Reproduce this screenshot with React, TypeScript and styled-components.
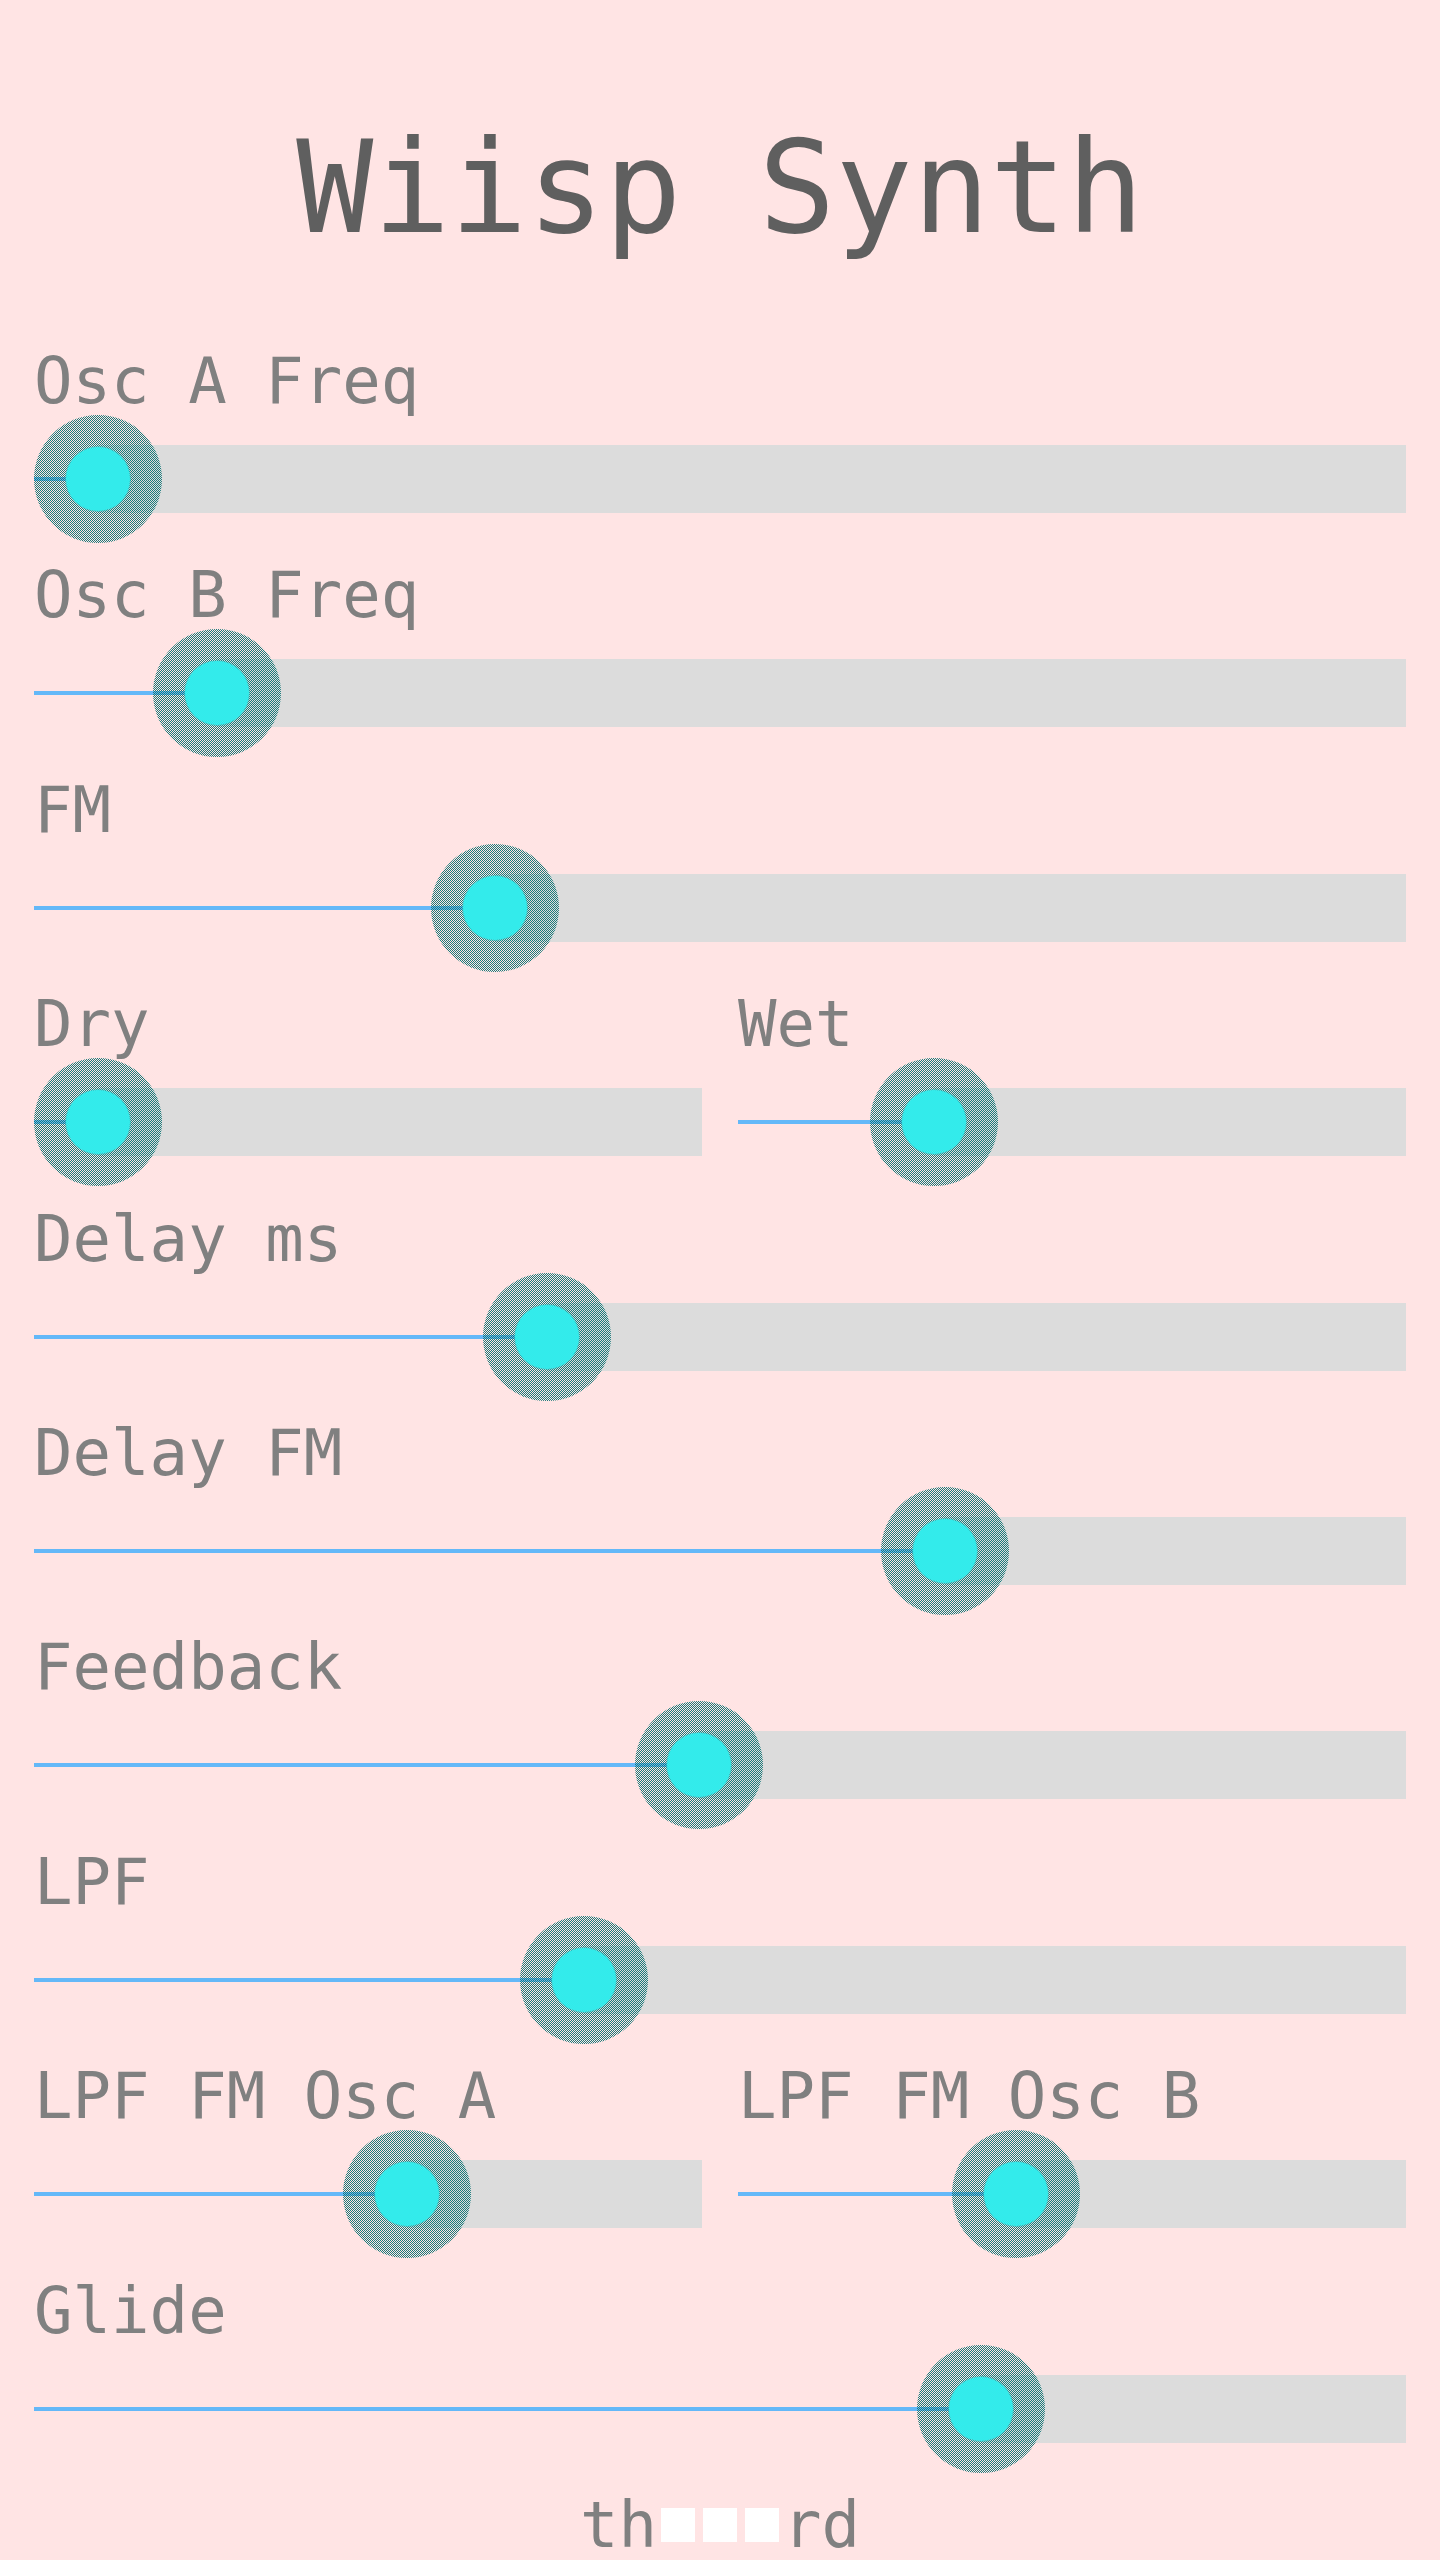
import React from "react";
import styled, { createGlobalStyle } from "styled-components";

const Global = createGlobalStyle`
  html, body {
    margin: 0;
    padding: 0;
    background: #ffe4e4;
  }
  body {
    font-family: "DejaVu Sans Mono", "Liberation Mono", monospace;
  }
`;

const Page = styled.main`
  box-sizing: border-box;
  width: 1440px;
  min-height: 2560px;
  padding: 124px 34px 0;
  display: flex;
  flex-direction: column;
`;

const Title = styled.h1`
  margin: 0 0 97px;
  font-family: "DejaVu Sans Mono", monospace;
  font-weight: normal;
  font-size: 128px;
  line-height: 128px;
  color: #5f5f5f;
  text-align: center;
`;

const Rows = styled.div`
  display: flex;
  flex-direction: column;
  gap: 20.4px;
`;

const Pair = styled.div`
  display: grid;
  grid-template-columns: 1fr 1fr;
  column-gap: 36px;
`;

const Field = styled.div`
  display: flex;
  flex-direction: column;
  gap: 2px;
  min-width: 0;
`;

const Label = styled.label`
  font-family: "DejaVu Sans Mono", monospace;
  font-size: 64px;
  line-height: 64px;
  height: 64px;
  color: #808080;
  white-space: nowrap;
`;

const SliderBox = styled.div`
  position: relative;
  height: 128px;
  display: flex;
  align-items: center;
`;

const Track = styled.div`
  flex: 1;
  height: 68px;
  background: #dcdcdc;
`;

const Fill = styled.div`
  position: absolute;
  left: 0;
  top: 62px;
  height: 4px;
  background: #64b8f8;
`;

const Thumb = styled.div`
  position: absolute;
  top: 0;
  width: 128px;
  height: 128px;
  margin-left: -64px;
  border-radius: 50%;
  background: repeating-conic-gradient(#1b7b7b 0% 25%, transparent 0% 50%) 0 0 / 2px 2px;
  display: flex;
  align-items: center;
  justify-content: center;
`;

const Knob = styled.div`
  width: 64px;
  height: 64px;
  border-radius: 50%;
  background: #33ebeb;
  box-shadow: 0 0 0 1px rgba(40, 200, 200, 0.5);
`;

const Footer = styled.footer`
  font-family: "DejaVu Sans Mono", monospace;
  font-size: 64px;
  line-height: 64px;
  color: #808080;
  text-align: center;
`;

const Block = styled.span`
  display: inline-block;
  width: 34px;
  height: 34px;
  margin: 0 4px 5px;
  background: #ffffff;
  vertical-align: baseline;
`;

type SliderProps = { label: string; value: number };

const Slider: React.FC<SliderProps> = ({ label, value }) => {
  const pos = `calc(64px + (100% - 128px) * ${value})`;
  return (
    <Field>
      <Label>{label}</Label>
      <SliderBox>
        <Track style={{ marginLeft: pos }} />
        <Fill style={{ width: pos }} />
        <Thumb style={{ left: pos }}>
          <Knob />
        </Thumb>
      </SliderBox>
    </Field>
  );
};

type Row =
  | { kind: "single"; label: string; value: number }
  | { kind: "pair"; items: SliderProps[] };

const rows: Row[] = [
  { kind: "single", label: "Osc A Freq", value: 0 },
  { kind: "single", label: "Osc B Freq", value: 0.0957 },
  { kind: "single", label: "FM", value: 0.319 },
  {
    kind: "pair",
    items: [
      { label: "Dry", value: 0 },
      { label: "Wet", value: 0.244 },
    ],
  },
  { kind: "single", label: "Delay ms", value: 0.361 },
  { kind: "single", label: "Delay FM", value: 0.681 },
  { kind: "single", label: "Feedback", value: 0.483 },
  { kind: "single", label: "LPF", value: 0.391 },
  {
    kind: "pair",
    items: [
      { label: "LPF FM Osc A", value: 0.572 },
      { label: "LPF FM Osc B", value: 0.396 },
    ],
  },
  { kind: "single", label: "Glide", value: 0.71 },
];

export default function App() {
  return (
    <>
      <Global />
      <Page>
        <Title>Wiisp Synth</Title>
        <Rows>
          {rows.map((r, i) =>
            r.kind === "single" ? (
              <Slider key={i} label={r.label} value={r.value} />
            ) : (
              <Pair key={i}>
                {r.items.map((it) => (
                  <Slider key={it.label} label={it.label} value={it.value} />
                ))}
              </Pair>
            )
          )}
          <Footer>
            th<Block />
            <Block />
            <Block />rd
          </Footer>
        </Rows>
      </Page>
    </>
  );
}
